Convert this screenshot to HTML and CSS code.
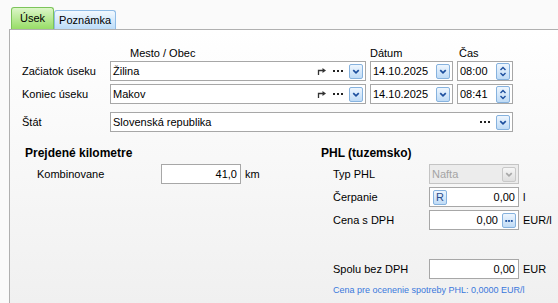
FILE: index.html
```html
<!DOCTYPE html>
<html lang="sk">
<head>
    <meta charset="UTF-8">
    <meta name="viewport" content="width=device-width, initial-scale=1.0">
    <title>Úsek</title>
    <link rel="stylesheet" href="styles.css">
</head>
<body>
    <!-- Tab strip -->
    <div class="tabs">
        <div class="tab tab-active">Úsek</div>
        <div class="tab">Poznámka</div>
    </div>

    <div class="panel">
        <!-- Route: start, end, country -->
        <div class="line head">
            <span class="lbl"></span>
            <span class="city city-head">Mesto / Obec</span>
            <span class="date">Dátum</span>
            <span class="time time-head">Čas</span>
        </div>

        <div class="line">
            <label class="lbl">Začiatok úseku</label>
            <div class="field city">
                <span class="val">Žilina</span>
                <svg class="goto" width="9" height="8" viewBox="0 0 9 8"><path d="M1.5 8V3.5H6" fill="none" stroke="#333" stroke-width="1.3"/><path d="M5.5 1L9 3.5 5.5 6z" fill="#333"/></svg>
                <svg class="dots" width="10" height="2" viewBox="0 0 10 2"><rect x="0" width="2" height="2"/><rect x="4" width="2" height="2"/><rect x="8" width="2" height="2"/></svg>
                <span class="btn"><svg width="13" height="13" viewBox="0 0 13 13"><polyline points="3.5,5 6.5,8 9.5,5" fill="none" stroke="#1d4f9e" stroke-width="1.8"/></svg></span>
            </div>
            <div class="field date">
                <span class="val">14.10.2025</span>
                <span class="btn"><svg width="13" height="13" viewBox="0 0 13 13"><polyline points="3.5,5 6.5,8 9.5,5" fill="none" stroke="#1d4f9e" stroke-width="1.8"/></svg></span>
            </div>
            <div class="field time">
                <span class="val">08:00</span>
                <span class="btn spin"><svg width="12" height="15" viewBox="0 0 12 15"><polyline points="3.5,6 6,3.5 8.5,6" fill="none" stroke="#1d4f9e" stroke-width="1.4"/><polyline points="3.5,9 6,11.5 8.5,9" fill="none" stroke="#1d4f9e" stroke-width="1.4"/></svg></span>
            </div>
        </div>

        <div class="line">
            <label class="lbl">Koniec úseku</label>
            <div class="field city">
                <span class="val">Makov</span>
                <svg class="goto" width="9" height="8" viewBox="0 0 9 8"><path d="M1.5 8V3.5H6" fill="none" stroke="#333" stroke-width="1.3"/><path d="M5.5 1L9 3.5 5.5 6z" fill="#333"/></svg>
                <svg class="dots" width="10" height="2" viewBox="0 0 10 2"><rect x="0" width="2" height="2"/><rect x="4" width="2" height="2"/><rect x="8" width="2" height="2"/></svg>
                <span class="btn"><svg width="13" height="13" viewBox="0 0 13 13"><polyline points="3.5,5 6.5,8 9.5,5" fill="none" stroke="#1d4f9e" stroke-width="1.8"/></svg></span>
            </div>
            <div class="field date">
                <span class="val">14.10.2025</span>
                <span class="btn"><svg width="13" height="13" viewBox="0 0 13 13"><polyline points="3.5,5 6.5,8 9.5,5" fill="none" stroke="#1d4f9e" stroke-width="1.8"/></svg></span>
            </div>
            <div class="field time">
                <span class="val">08:41</span>
                <span class="btn spin"><svg width="12" height="15" viewBox="0 0 12 15"><polyline points="3.5,6 6,3.5 8.5,6" fill="none" stroke="#1d4f9e" stroke-width="1.4"/><polyline points="3.5,9 6,11.5 8.5,9" fill="none" stroke="#1d4f9e" stroke-width="1.4"/></svg></span>
            </div>
        </div>

        <div class="line state">
            <label class="lbl">Štát</label>
            <div class="field wide">
                <span class="val">Slovenská republika</span>
                <svg class="dots" width="10" height="2" viewBox="0 0 10 2"><rect x="0" width="2" height="2"/><rect x="4" width="2" height="2"/><rect x="8" width="2" height="2"/></svg>
                <span class="btn"><svg width="13" height="13" viewBox="0 0 13 13"><polyline points="3.5,5 6.5,8 9.5,5" fill="none" stroke="#1d4f9e" stroke-width="1.8"/></svg></span>
            </div>
        </div>

        <!-- Kilometres and fuel -->
        <div class="bottom">
            <div class="section km">
                <h2>Prejdené kilometre</h2>
                <div class="row">
                    <span class="row-lbl">Kombinovane</span>
                    <div class="field num"><span class="val">41,0</span></div>
                    <span class="unit">km</span>
                </div>
            </div>

            <div class="section phl">
                <h2>PHL (tuzemsko)</h2>
                <div class="row">
                    <span class="row-lbl">Typ PHL</span>
                    <div class="field num disabled">
                        <span class="val">Nafta</span>
                        <span class="btn"><svg width="13" height="13" viewBox="0 0 13 13"><polyline points="3.5,5 6.5,8 9.5,5" fill="none" stroke="#a8a8a8" stroke-width="1.8"/></svg></span>
                    </div>
                </div>
                <div class="row">
                    <span class="row-lbl">Čerpanie</span>
                    <div class="field num">
                        <span class="btn r-btn">R</span>
                        <span class="val">0,00</span>
                    </div>
                    <span class="unit">l</span>
                </div>
                <div class="row">
                    <span class="row-lbl">Cena s DPH</span>
                    <div class="field num">
                        <span class="val">0,00</span>
                        <span class="btn"><svg width="13" height="13" viewBox="0 0 13 13"><rect x="2.5" y="6" width="2" height="2" fill="#1d4f9e"/><rect x="5.5" y="6" width="2" height="2" fill="#1d4f9e"/><rect x="8.5" y="6" width="2" height="2" fill="#1d4f9e"/></svg></span>
                    </div>
                    <span class="unit">EUR/l</span>
                </div>
                <div class="row total">
                    <span class="row-lbl">Spolu bez DPH</span>
                    <div class="field num"><span class="val">0,00</span></div>
                    <span class="unit">EUR</span>
                </div>
                <p class="note">Cena pre ocenenie spotreby PHL: 0,0000 EUR/l</p>
            </div>
        </div>
    </div>
</body>
</html>
```

FILE: styles.css
```css
/* Page base */
body {
    margin: 0;
    background: #fafafa;
    font-family: "Liberation Sans", Arial, sans-serif;
    font-size: 11px;
    color: #000;
    height: 303px;
    overflow: hidden;
}

/* Tabs */
.tabs {
    display: flex;
    align-items: flex-end;
    height: 21px;
    padding: 8px 0 0 11px;
}

.tab {
    height: 18px;
    line-height: 18px;
    padding: 0 4px;
    border: 1px solid #8fbce6;
    border-bottom: none;
    border-radius: 3px 3px 0 0;
    background: linear-gradient(#f2f9ff, #bcdcf8);
}

.tab-active {
    height: 21px;
    line-height: 21px;
    padding: 0 8px;
    border-color: #7cc45a;
    background: linear-gradient(#dcf6c8, #97dd66);
}

/* Main panel */
.panel {
    box-sizing: border-box;
    margin-left: 9px;
    border-left: 1px solid #b0b0b0;
    border-top: 1px solid #b0b0b0;
    padding: 17px 0 0 12px;
    height: 274px;
    background: linear-gradient(#ffffff, #f0f0f0);
}

/* Route rows */
.line {
    display: flex;
    align-items: center;
    gap: 4px;
}

.line + .line {
    margin-top: 3px;
}

.line.head + .line {
    margin-top: 1px;
}

.line.state {
    margin-top: 8px;
}

.head {
    line-height: 13px;
}

.lbl {
    width: 84px;
}

.city {
    width: 256px;
}

.date {
    width: 83px;
}

.time {
    width: 56px;
}

.wide {
    width: 403px;
}

.city-head {
    padding-left: 20px;
    box-sizing: border-box;
}

.time-head {
    padding-left: 2px;
    box-sizing: border-box;
}

/* Input look-alikes */
.field {
    display: flex;
    align-items: center;
    box-sizing: border-box;
    height: 20px;
    border: 1px solid #a7a7a7;
    background: #fff;
    padding: 0 2px 0 2px;
}

.field .val {
    flex: 1;
    white-space: nowrap;
}

.goto {
    margin-right: 7px;
}

.dots {
    fill: #222;
    margin-right: 6px;
}

.btn {
    display: flex;
    align-items: center;
    justify-content: center;
    box-sizing: border-box;
    width: 14px;
    height: 15px;
    border: 1px solid #86b2de;
    border-radius: 2px;
    background: linear-gradient(#eef6fe, #bfdbf6);
}

.btn.spin {
    height: 17px;
}

/* Bottom sections */
.bottom {
    display: flex;
    margin-top: 14px;
    padding-left: 3px;
}

.section h2 {
    margin: 0 0 4px;
    font-size: 12px;
    line-height: 14px;
    font-weight: bold;
}

.km {
    width: 296px;
}

.row {
    display: flex;
    align-items: center;
    height: 20px;
    margin-bottom: 3px;
}

.row-lbl {
    padding-left: 12px;
}

.km .row-lbl {
    width: 124px;
}

.phl .row-lbl {
    width: 96px;
}

.field.num {
    text-align: right;
}

.km .field.num {
    width: 80px;
}

.phl .field.num {
    width: 90px;
}

.field.num .val {
    padding-right: 1px;
}

.field.num .btn {
    margin-left: 3px;
}

.field.num .r-btn {
    margin: 0 0 0 1px;
    color: #2a4d8e;
    font-size: 11px;
}

.unit {
    margin-left: 4px;
}

.field.disabled {
    background: #ececec;
    border-color: #c4c4c4;
    color: #a4a4a4;
    text-align: left;
}

.field.disabled .btn {
    border-color: #c8c8c8;
    background: linear-gradient(#f6f6f6, #dedede);
}

.row.total {
    margin-top: 29px;
}

.note {
    margin: 6px 0 0 12px;
    font-size: 9px;
    color: #3a78dc;
}
```
